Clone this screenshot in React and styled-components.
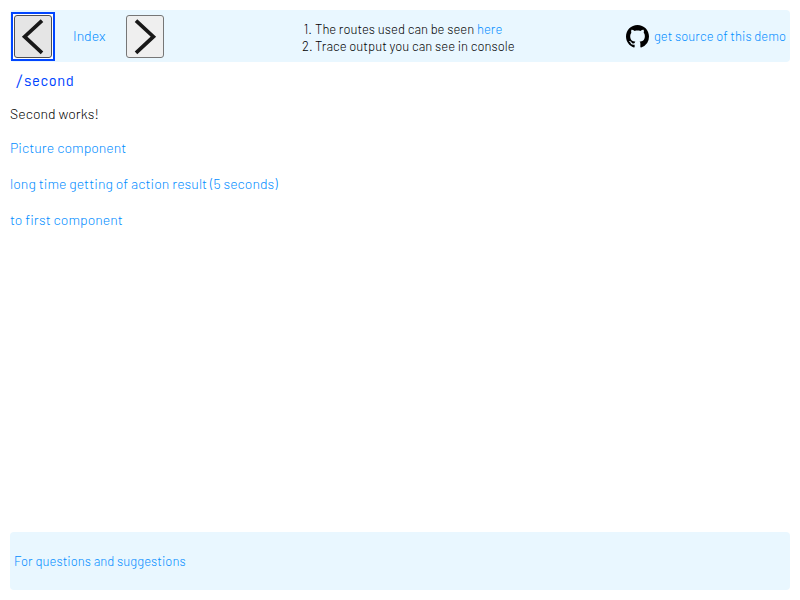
import React from "react";
import styled, { createGlobalStyle } from "styled-components";

const GlobalStyle = createGlobalStyle`
  * { box-sizing: border-box; }
  body {
    margin: 0;
    background: #fff;
    color: #000;
    font: 300 14px/17px Barlow, Roboto, sans-serif;
    letter-spacing: 0.05px;
  }
`;

const Page = styled.div`
  display: flex;
  flex-direction: column;
  height: 100vh;
  padding: 10px;
`;

const Header = styled.header`
  display: flex;
  flex: none;
  align-items: center;
  justify-content: space-between;
  height: 52px;
  padding: 0 4px;
  border-radius: 4px;
  background: #e9f7ff;
`;

const Nav = styled.nav`
  display: flex;
  align-items: center;
  width: 150px;
  padding-top: 1px;
`;

const NavButton = styled.button`
  display: flex;
  flex: none;
  width: 38px;
  height: 43px;
  padding: 0;
  border: 1px solid ${(p) => (p.$focused ? "#4f4f4f" : "#767676")};
  border-radius: 3px;
  background: ${(p) => (p.$focused ? "#e5e5e5" : "#efefef")};
`;

const FocusFrame = styled.span`
  display: flex;
  flex: none;
  margin: 0 -3px;
  padding: 1px;
  border: 2px solid #0045ff;
  background: #fff;
`;

const Link = styled.a`
  color: #008cff;
  text-decoration: none;
  white-space: nowrap;
`;

const IndexLink = styled(Link)`
  width: 36px;
  margin: -2px 17px 0 21px;
`;

const Notes = styled.ol`
  width: 218px;
  margin: 4px 0 0 35px;
  padding: 0;
  list-style: none;
  font-size: 13px;
  letter-spacing: 0.04px;
`;

const Note = styled.li`
  display: flex;
  gap: 3px;
  white-space: nowrap;
`;

const Marker = styled.span`
  width: 10px;
  text-align: right;
`;

const Source = styled.div`
  display: flex;
  align-items: center;
  justify-content: flex-end;
  gap: 5px;
  width: 163px;
  font-size: 13px;
  letter-spacing: 0.03px;

  svg { flex: none; margin-top: 1px; }
`;

const Route = styled.div`
  height: 17px;
  margin: 11px 0 15px 5px;
  color: #0045ff;
  font: 300 14px/17px "JetBrains Mono", "Roboto Mono", "Liberation Mono", monospace;
  letter-spacing: normal;
`;

const Content = styled.main`
  display: flex;
  flex: 1;
  flex-direction: column;
  align-items: flex-start;
`;

const Message = styled.p`
  margin: 0 0 17px;
`;

const Links = styled.div`
  display: flex;
  flex-direction: column;
  align-items: flex-start;
  gap: 19px;
`;

const Footer = styled.footer`
  display: flex;
  flex: none;
  align-items: center;
  height: 58px;
  padding: 0 4px;
  border-radius: 4px;
  background: #e9f7ff;
  font-size: 13px;
`;

const Chevron = ({ points }) => (
  <svg width="36" height="41" viewBox="0 0 36 41" fill="none" stroke="#181818" strokeWidth="3.7">
    <polyline points={points} />
  </svg>
);

const GithubMark = () => (
  <svg width="23" height="23" viewBox="0 0 16 16">
    <path
      fillRule="evenodd"
      d="M8 0C3.58 0 0 3.58 0 8c0 3.54 2.29 6.53 5.47 7.59.4.07.55-.17.55-.38 0-.19-.01-.82-.01-1.49-2.01.37-2.53-.49-2.69-.94-.09-.23-.48-.94-.82-1.13-.28-.15-.68-.52-.01-.53.63-.01 1.08.58 1.23.82.72 1.21 1.87.87 2.33.66.07-.52.28-.87.51-1.07-1.78-.2-3.64-.89-3.64-3.95 0-.87.31-1.59.82-2.15-.08-.2-.36-1.02.08-2.12 0 0 .67-.21 2.2.82.64-.18 1.32-.27 2-.27.68 0 1.36.09 2 .27 1.53-1.04 2.2-.82 2.2-.82.44 1.1.16 1.92.08 2.12.51.56.82 1.27.82 2.15 0 3.07-1.87 3.75-3.65 3.95.29.25.54.73.54 1.48 0 1.07-.01 1.93-.01 2.2 0 .21.15.46.55.38A8.013 8.013 0 0016 8c0-4.42-3.58-8-8-8z"
    />
  </svg>
);

export default function App() {
  return (
    <Page>
      <GlobalStyle />
      <Header>
        <Nav>
          <FocusFrame>
            <NavButton $focused aria-label="Back">
              <Chevron points="27,4.6 9.6,20.7 27,36.9" />
            </NavButton>
          </FocusFrame>
          <IndexLink href="#index">Index</IndexLink>
          <NavButton aria-label="Forward">
            <Chevron points="9,4.6 26.4,20.7 9,36.9" />
          </NavButton>
        </Nav>
        <Notes>
          <Note>
            <Marker>1.</Marker>
            <span>The routes used can be seen <Link href="#routes">here</Link></span>
          </Note>
          <Note>
            <Marker>2.</Marker>
            <span>Trace output you can see in console</span>
          </Note>
        </Notes>
        <Source>
          <GithubMark />
          <Link href="#source">get source of this demo</Link>
        </Source>
      </Header>
      <Route>/second</Route>
      <Content>
        <Message>Second works!</Message>
        <Links>
          <Link href="#picture">Picture component</Link>
          <Link href="#action">long time getting of action result (5 seconds)</Link>
          <Link href="#first">to first component</Link>
        </Links>
      </Content>
      <Footer>
        <Link href="#contact">For questions and suggestions</Link>
      </Footer>
    </Page>
  );
}
